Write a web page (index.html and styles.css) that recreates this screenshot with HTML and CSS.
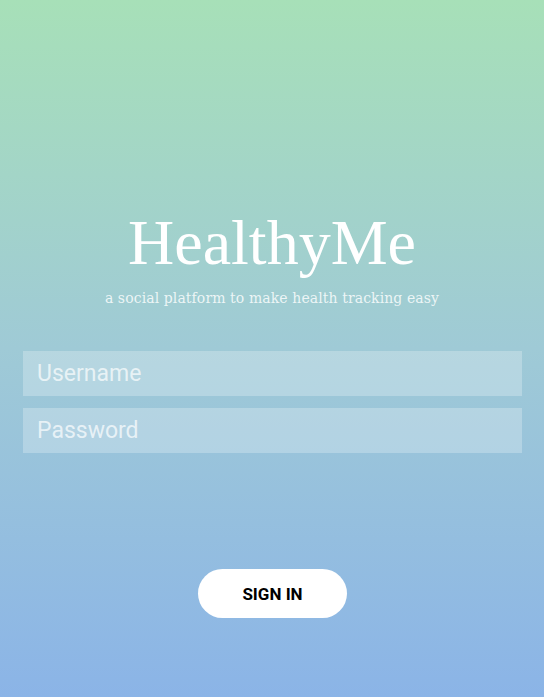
FILE: index.html
```html
<!DOCTYPE html>
<html>
<head>
<meta charset="utf-8">
<link rel="stylesheet" href="styles.css">
</head>
<body>
<main class="screen">
  <header class="brand">
    <h1 class="brand-title">HealthyMe</h1>
    <p class="brand-tagline">a social platform to make health tracking easy</p>
  </header>
  <form class="login">
    <input class="field" type="text" placeholder="Username">
    <input class="field" type="password" placeholder="Password">
    <button class="signin" type="button">SIGN IN</button>
  </form>
</main>
</body>
</html>
```
FILE: styles.css
```css
html, body {
  margin: 0;
  padding: 0;
}
body {
  width: 544px;
  height: 697px;
  overflow: hidden;
  background: linear-gradient(to bottom, #a7e0b8 0%, #9fcad6 50%, #8bb4e7 100%);
}
.screen {
  display: flex;
  flex-direction: column;
  padding-top: 211px;
}
.brand {
  display: flex;
  flex-direction: column;
  align-items: center;
  color: #fff;
}
.brand-title {
  margin: 0;
  font-family: "Liberation Serif", serif;
  font-weight: normal;
  font-size: 64px;
  line-height: 64px;
  color: #ffffff;
}
.brand-tagline {
  margin: 14px 0 0;
  font-family: "DejaVu Serif", serif;
  font-size: 14px;
  line-height: 18px;
  color: rgba(255, 255, 255, 0.82);
  letter-spacing: 0.1px;
}
.login {
  display: flex;
  flex-direction: column;
  align-items: flex-start;
  margin: 44px 0 0 23px;
}
.field {
  box-sizing: border-box;
  width: 499px;
  height: 45px;
  margin: 0 0 12px;
  padding: 0 14px;
  border: none;
  outline: none;
  background: rgba(255, 255, 255, 0.25);
  font-family: Roboto, sans-serif;
  font-size: 23px;
  color: #fff;
}
.field::placeholder {
  color: rgba(255, 255, 255, 0.7);
}
.signin {
  align-self: center;
  margin: 104px 0 0 -22px;
  width: 149px;
  height: 49px;
  border: none;
  border-radius: 25px;
  background: #ffffff;
  font-family: Roboto, sans-serif;
  font-weight: bold;
  font-size: 17px;
  color: #000;
  padding: 0;
}
```
